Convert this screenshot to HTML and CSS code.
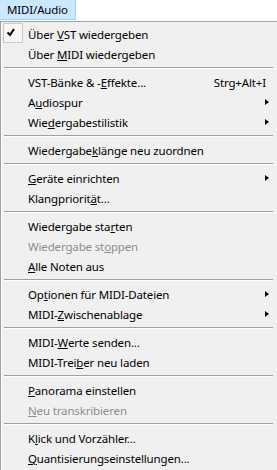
FILE: index.html
```html
<!DOCTYPE html>
<html lang="de">
<head>
<meta charset="utf-8">
<link rel="stylesheet" href="styles.css">
</head>
<body>
<div class="menubar"><span class="top-item">MIDI/Audio</span></div>
<div class="menu">
  <div class="item">
    <span class="checkbox"><svg width="20" height="20" viewBox="0 0 20 20"><path d="M4.5 9.5 L7 12 L11 6" fill="none" stroke="#000" stroke-width="2"/></svg></span>
    <span class="label">Über <u>V</u>ST wiedergeben</span>
  </div>
  <div class="item"><span class="label">Über <u>M</u>IDI wiedergeben</span></div>
  <div class="sep"></div>
  <div class="item"><span class="label">VST-Bänke &amp; -<u>E</u>ffekte...</span><span class="shortcut">Strg+Alt+I</span></div>
  <div class="item sub"><span class="label">A<u>u</u>diospur</span></div>
  <div class="item sub"><span class="label">Wie<u>d</u>ergabestilistik</span></div>
  <div class="sep"></div>
  <div class="item"><span class="label">Wiedergabe<u>k</u>länge neu zuordnen</span></div>
  <div class="sep"></div>
  <div class="item sub"><span class="label"><u>G</u>eräte einrichten</span></div>
  <div class="item"><span class="label">Klangpriorit<u>ä</u>t...</span></div>
  <div class="sep"></div>
  <div class="item"><span class="label">Wiedergabe sta<u>r</u>ten</span></div>
  <div class="item disabled"><span class="label">Wiedergabe st<u>o</u>ppen</span></div>
  <div class="item"><span class="label"><u>A</u>lle Noten aus</span></div>
  <div class="sep"></div>
  <div class="item sub"><span class="label">Op<u>t</u>ionen für MIDI-Dateien</span></div>
  <div class="item sub"><span class="label">MIDI-<u>Z</u>wischenablage</span></div>
  <div class="sep"></div>
  <div class="item"><span class="label">MIDI-<u>W</u>erte senden...</span></div>
  <div class="item"><span class="label">MIDI-Trei<u>b</u>er neu laden</span></div>
  <div class="sep"></div>
  <div class="item"><span class="label"><u>P</u>anorama einstellen</span></div>
  <div class="item disabled"><span class="label"><u>N</u>eu transkribieren</span></div>
  <div class="sep"></div>
  <div class="item"><span class="label">K<u>l</u>ick und Vorzähler...</span></div>
  <div class="item"><span class="label"><u>Q</u>uantisierungseinstellungen...</span></div>
</div>
</body>
</html>
```

FILE: styles.css
```css
html, body {
  margin: 0;
  padding: 0;
  background: #f0f0f0;
  font-family: "Noto Sans", "Open Sans", sans-serif;
  font-size: 11.5px;
  letter-spacing: -0.15px;
  color: #000;
  overflow: hidden;
}

.menubar {
  height: 21px;
  background: #ffffff;
  display: flex;
}

.top-item {
  box-sizing: border-box;
  width: 76px;
  height: 20px;
  padding-left: 7px;
  line-height: 19px;
  background: #cce8ff;
  border: 1px solid #99d1ff;
  border-left: none;
  border-top: none;
}

.menu {
  border-top: 1px solid #a0a0a0;
  border-left: 1px solid #a0a0a0;
  box-shadow: inset 1px 0 0 #ffffff;
  padding-top: 2px;
  min-height: 460px;
}

.item {
  position: relative;
  height: 20px;
  display: flex;
  align-items: center;
  padding-left: 27px;
  padding-right: 11px;
  white-space: nowrap;
}

.item u {
  text-decoration-thickness: 1px;
  text-underline-offset: 1px;
}

.label {
  flex: 1;
}

.disabled {
  color: #8d8d8d;
}

.sub::after {
  content: "";
  position: absolute;
  right: 8px;
  top: 7px;
  border-left: 4px solid #000;
  border-top: 3.5px solid transparent;
  border-bottom: 3.5px solid transparent;
}

.checkbox {
  position: absolute;
  left: 2px;
  top: -1px;
  width: 20px;
  height: 20px;
  box-sizing: border-box;
  border: 1px solid #c8c8c8;
  background: #f7f7f7;
}

.checkbox svg {
  position: absolute;
  left: 0;
  top: 0;
  margin: -1px;
}

.sep {
  height: 8px;
  box-sizing: border-box;
  padding-top: 3px;
  margin-left: 3px;
  margin-right: 4px;
}

.sep::before {
  content: "";
  display: block;
  height: 1px;
  background: #a0a0a0;
  border-bottom: 1px solid #ffffff;
}
```
